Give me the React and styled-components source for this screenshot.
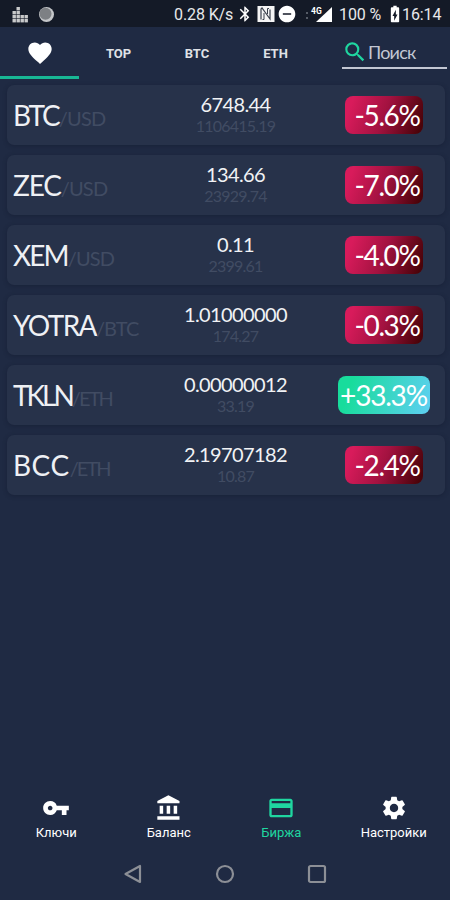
import React from "react";
import styled, { createGlobalStyle } from "styled-components";
import {
  MdBatteryChargingFull,
  MdBluetooth,
  MdDoNotDisturbOn,
  MdFavorite,
  MdPayment,
  MdSearch,
  MdSettings,
  MdVpnKey,
} from "react-icons/md";

const rows = [
  { coin: "BTC", base: "USD", price: "6748.44", volume: "1106415.19", change: "-5.6%", track: -2.1, baseTrack: -0.8 },
  { coin: "ZEC", base: "USD", price: "134.66", volume: "23929.74", change: "-7.0%", track: -1.2, baseTrack: -0.8 },
  { coin: "XEM", base: "USD", price: "0.11", volume: "2399.61", change: "-4.0%", track: -1.9, baseTrack: -0.8 },
  { coin: "YOTRA", base: "BTC", price: "1.01000000", volume: "174.27", change: "-0.3%", track: -1.6, baseTrack: -0.9 },
  { coin: "TKLN", base: "ETH", price: "0.00000012", volume: "33.19", change: "+33.3%", track: -3, baseTrack: -1.9, up: true },
  { coin: "BCC", base: "ETH", price: "2.19707182", volume: "10.87", change: "-2.4%", track: 0.5, baseTrack: -1.9 },
];

function BankIcon() {
  return (
    <svg width="28" height="28" viewBox="0 0 24 24" fill="currentColor">
      <path d="M4 10v7h3v-7H4zm6 0v7h3v-7h-3zM2 22h19v-3H2v3zm14-12v7h3v-7h-3zM11.500 1L2 6v2h19V6l-9.500-5z" />
    </svg>
  );
}

const bars = [3, 4, 2, 2];

function EqualizerIcon() {
  return (
    <svg width="17" height="17" viewBox="0 0 17 17" fill="#c9cacb">
      {bars.map((count, col) =>
        Array.from({ length: count }, (_, i) => (
          <rect key={`${col}-${i}`} x={0.5 + col * 4} y={13 - i * 4} width="3.400" height="3.400" />
        ))
      )}
    </svg>
  );
}

function MoonIcon() {
  return (
    <svg width="17" height="17" viewBox="0 0 17 17">
      <circle cx="8.500" cy="8.500" r="7.500" fill="#c4c6c9" />
      <circle cx="7.500" cy="7.700" r="6" fill="#7d8084" />
    </svg>
  );
}

function NfcIcon() {
  return (
    <svg width="18" height="16" viewBox="0 0 18 16">
      <rect x="0.500" y="0" width="17" height="16" fill="#f5f5f5" />
      <path d="M4 13.500V3l1-1 8 11V3.500" fill="none" stroke="#3a404c" strokeWidth="1.200" />
      <path d="M7 7v6.500H5.500M10.500 8V2.500H12" fill="none" stroke="#3a404c" />
    </svg>
  );
}

function SignalIcon() {
  return (
    <svg width="28" height="17" viewBox="0 0 28 17">
      <path d="M27 1v15H11z" fill="#fff" />
      <path d="M2 6v2M2 11v2" stroke="#555b66" strokeWidth="2" />
      <text x="6" y="8" fill="#fff" fontFamily="Roboto, sans-serif" fontSize="8.500" fontWeight="700">4G</text>
    </svg>
  );
}

function App() {
  return (
    <Screen>
      <GlobalStyle />
      <StatusBar>
        <Notifications>
          <EqualizerIcon />
          <MoonIcon />
        </Notifications>
        <StatusText $width={59}>0.28 K/s</StatusText>
        <StatusIcon $width={24}><MdBluetooth size={18} /></StatusIcon>
        <StatusIcon $width={18}><NfcIcon /></StatusIcon>
        <StatusIcon $width={24}><MdDoNotDisturbOn size={20} /></StatusIcon>
        <StatusIcon $width={40}><SignalIcon /></StatusIcon>
        <StatusText $width={48}>100 %</StatusText>
        <StatusIcon $width={15}><MdBatteryChargingFull size={20} /></StatusIcon>
        <StatusText $width={40}>16:14</StatusText>
      </StatusBar>
      <TabBar>
        <Tab $active><MdFavorite size={28} /></Tab>
        <Tab>TOP</Tab>
        <Tab>BTC</Tab>
        <Tab>ETH</Tab>
        <Search>
          <MdSearch size={26} />
          <Placeholder>Поиск</Placeholder>
        </Search>
      </TabBar>
      <Pairs>
        {rows.map((row) => (
          <Pair key={row.coin}>
            <Name>
              <Coin $track={row.track}>{row.coin}</Coin>
              <Base $track={row.baseTrack}>/{row.base}</Base>
            </Name>
            <Quote>
              <Price>{row.price}</Price>
              <Volume>{row.volume}</Volume>
            </Quote>
            <ChangeCell>
              <Change $up={row.up}>{row.change}</Change>
            </ChangeCell>
          </Pair>
        ))}
      </Pairs>
      <BottomNav>
        <NavItem><MdVpnKey size={28} />Ключи</NavItem>
        <NavItem><BankIcon />Баланс</NavItem>
        <NavItem $active><MdPayment size={28} />Биржа</NavItem>
        <NavItem><MdSettings size={28} />Настройки</NavItem>
      </BottomNav>
      <SystemNav>
        <svg width="20" height="20" viewBox="0 0 20 20"><path d="M17 2v16L2.500 10z" /></svg>
        <svg width="20" height="20" viewBox="0 0 20 20"><circle cx="10" cy="10" r="8" /></svg>
        <svg width="20" height="20" viewBox="0 0 20 20"><rect x="2" y="2" width="16" height="16" rx="1.500" /></svg>
      </SystemNav>
    </Screen>
  );
}

export default App;

const GlobalStyle = createGlobalStyle`
  * {
    box-sizing: border-box;
  }
  body {
    margin: 0;
    background: #1f2a43;
  }
  svg {
    display: block;
    flex: none;
  }
`;

const Screen = styled.div`
  display: flex;
  flex-direction: column;
  width: 450px;
  height: 900px;
  overflow: hidden;
  background: #1f2a43;
  color: #fff;
  font-family: Roboto, sans-serif;
`;

const StatusBar = styled.div`
  display: flex;
  align-items: center;
  height: 27px;
  padding: 1px 8px 0 12px;
  background: #141a27;
`;

const Notifications = styled.div`
  display: flex;
  flex: 1;
  gap: 9px;
`;

const StatusText = styled.span`
  width: ${(props) => props.$width}px;
  color: #e8e9eb;
  font-size: 16px;
  letter-spacing: -0.1px;
  white-space: nowrap;
`;

const StatusIcon = styled.span`
  display: flex;
  justify-content: center;
  width: ${(props) => props.$width}px;
`;

const TabBar = styled.div`
  display: grid;
  grid-template-columns: 79px 79px 78px 79px 135px;
  height: 53px;
`;

const Tab = styled.div`
  display: flex;
  align-items: center;
  justify-content: center;
  height: 52px;
  padding-top: ${(props) => (props.$active ? 2 : 3)}px;
  border-bottom: 3px solid ${(props) => (props.$active ? "#18b795" : "transparent")};
  color: ${(props) => (props.$active ? "#fff" : "#dfe1e6")};
  font-size: 13px;
  font-weight: 700;
`;

const Search = styled.div`
  display: flex;
  align-items: center;
  height: 42px;
  margin: 0 3px 0 27px;
  padding-top: 9px;
  border-bottom: 2px solid #c3c7d3;
  color: #1fd6a0;
`;

const Placeholder = styled.span`
  color: #c3c7d3;
  font-family: Lato, sans-serif;
  font-size: 18px;
  letter-spacing: -0.8px;
`;

const Pairs = styled.div`
  display: flex;
  flex: 1;
  flex-direction: column;
  gap: 10px;
  padding: 5px 5px 0 7px;
  font-family: Lato, sans-serif;
`;

const Pair = styled.div`
  display: grid;
  grid-template-columns: 146px 166px 1fr;
  align-items: center;
  height: 60px;
  padding-left: 6px;
  border-radius: 7px;
  background: #27324a;
  box-shadow: 0 1px 4px rgba(17, 25, 44, 0.45);
`;

const Name = styled.div`
  display: flex;
  align-items: baseline;
  padding-bottom: 1px;
  white-space: nowrap;
`;

const Coin = styled.span`
  color: #eef0f4;
  font-size: 28px;
  letter-spacing: ${(props) => props.$track}px;
`;

const Base = styled.span`
  color: #414c63;
  font-size: 20px;
  letter-spacing: ${(props) => props.$track}px;
`;

const Quote = styled.div`
  display: flex;
  flex-direction: column;
  align-items: center;
  padding: 0 13px 2px 0;
`;

const Price = styled.span`
  color: #f1f2f5;
  font-size: 20px;
  line-height: 23px;
  letter-spacing: -0.6px;
`;

const Volume = styled.span`
  color: #414c63;
  font-size: 16px;
  line-height: 19px;
  letter-spacing: -0.8px;
`;

const ChangeCell = styled.div`
  display: flex;
  justify-content: center;
  padding: 0 3px 1px 0;
`;

const Change = styled.span`
  display: flex;
  align-items: center;
  justify-content: ${(props) => (props.$up ? "center" : "flex-end")};
  width: ${(props) => (props.$up ? 92 : 78)}px;
  height: 38px;
  padding-right: ${(props) => (props.$up ? 0 : 3)}px;
  border-radius: 8px;
  background: ${(props) =>
    props.$up
      ? "linear-gradient(110deg, #18dc9c 15%, #5bd0ee 95%)"
      : "linear-gradient(110deg, #d81b5b 10%, #a31240 50%, #4a0309 95%)"};
  font-size: 28px;
  letter-spacing: ${(props) => (props.$up ? -1.2 : -1.4)}px;
`;

const BottomNav = styled.div`
  display: grid;
  grid-template-columns: repeat(4, 1fr);
  height: 56px;
`;

const NavItem = styled.div`
  display: flex;
  flex-direction: column;
  align-items: center;
  color: ${(props) => (props.$active ? "#1fd6a0" : "#fff")};
  font-size: 13px;
  line-height: 22px;
`;

const SystemNav = styled.div`
  display: flex;
  justify-content: center;
  gap: 72px;
  height: 50px;
  padding-top: 14px;

  svg {
    fill: none;
    stroke: #8c8f96;
    stroke-width: 2.2;
    stroke-linejoin: round;
  }
`;
